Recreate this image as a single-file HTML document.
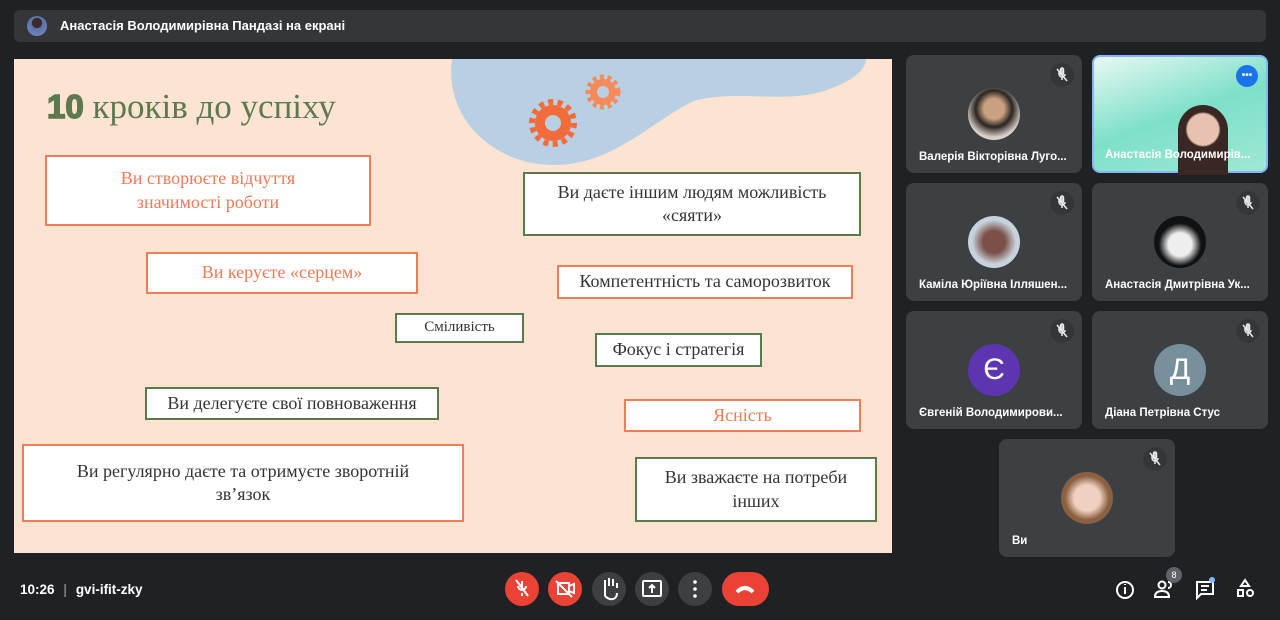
<!DOCTYPE html>
<html><head><meta charset="utf-8"><style>
*{box-sizing:border-box;margin:0;padding:0}
body{width:1280px;height:620px;background:#202124;position:relative;overflow:hidden;font-family:"Liberation Sans",sans-serif;color:#fff}
.top{position:absolute;left:14px;top:10px;width:1252px;height:32px;background:#35363a;border-radius:6px}
.top .av{position:absolute;left:13px;top:6px;width:20px;height:20px;border-radius:50%;background:radial-gradient(circle at 50% 35%,#3a2a28 30%,#5b6fa8 32%,#7b8fc8)}
.top span{position:absolute;left:46px;top:8px;font-size:13px;font-weight:bold}
.slide{position:absolute;left:14px;top:59px;width:878px;height:494px;background:#fde4d2;overflow:hidden}
.b{position:absolute;background:#fff;display:flex;align-items:center;justify-content:center;text-align:center;font-family:"Liberation Serif",serif;line-height:1.3}
.o{border:2px solid #ef7d57}
.g{border:2px solid #5b7a4c}
.ot{color:#ec7a55}.dt{color:#333}
.tile{position:absolute;width:176px;height:118px;background:#3c4043;border-radius:8px}
.tile .n{position:absolute;left:13px;bottom:10px;font-size:11.5px;font-weight:bold;color:#fff;white-space:nowrap}
.tile .m{position:absolute;right:8px;top:8px;width:24px;height:24px;border-radius:50%;background:#35363a}
.tile .p{position:absolute;left:62px;top:33px;width:52px;height:52px;border-radius:50%}
.btn{position:absolute;top:572px;width:34px;height:34px;border-radius:50%;background:#3c4043}
.red{background:#ea4335}
</style></head><body>
<svg width="0" height="0" style="position:absolute"><defs><g id="mic" fill="none" stroke="#e8eaed" stroke-width="1.5"><path d="M12,6 v5 a0,0 0 0 0 0,0 M9,9 v2 a3,3 0 0 0 6,0 M12,14 v3 M7,6 l10,12"/><rect x="10.5" y="5" width="3" height="7" rx="1.5"/></g></defs></svg>
<div class="top"><div class="av"></div><span>Анастасія Володимирівна Пандазі на екрані</span></div>
<div class="slide">
<svg style="position:absolute;left:0;top:0" width="878" height="494">
<path d="M438,0 C430,60 480,106 540,106 C600,106 640,60 680,42 C720,30 770,45 810,32 C840,22 852,10 852,0 Z" fill="#b9cfe3"/>
<g fill="#f26b3a"><circle cx="539" cy="64" r="18"/><g stroke="#f26b3a" stroke-width="6" stroke-dasharray="5 4.4"><circle cx="539" cy="64" r="21" fill="none"/></g><circle cx="539" cy="64" r="8" fill="#b9cfe3"/></g>
<g fill="#f68a5a"><circle cx="589" cy="33" r="13"/><g stroke="#f68a5a" stroke-width="5" stroke-dasharray="4 3.5"><circle cx="589" cy="33" r="15" fill="none"/></g><circle cx="589" cy="33" r="6" fill="#b9cfe3"/></g>
<circle cx="708" cy="74" r="8" fill="none" stroke="#fde4d2" stroke-width="2.5"/><circle cx="730" cy="83" r="3" fill="#fde4d2"/>
</svg>
<div style="position:absolute;left:33px;top:28px;font-family:'Liberation Serif',serif;font-size:35px;color:#5d7a4e"><b style="font-family:'Liberation Sans',sans-serif;font-weight:900;font-size:33px;-webkit-text-stroke:1.5px #5d7a4e">10</b> кроків до успіху</div>
<div class="b o ot" style="left:31px;top:96px;width:326px;height:71px;font-size:18px">Ви створюєте відчуття<br>значимості роботи</div>
<div class="b g dt" style="left:509px;top:113px;width:338px;height:64px;font-size:18px">Ви даєте іншим людям можливість<br>«сяяти»</div>
<div class="b o ot" style="left:132px;top:193px;width:272px;height:42px;font-size:18px">Ви керуєте «серцем»</div>
<div class="b o dt" style="left:543px;top:206px;width:296px;height:34px;font-size:18px">Компетентність та саморозвиток</div>
<div class="b g dt" style="left:381px;top:254px;width:129px;height:30px;font-size:15px">Сміливість</div>
<div class="b g dt" style="left:581px;top:274px;width:167px;height:34px;font-size:18px">Фокус і стратегія</div>
<div class="b g dt" style="left:131px;top:328px;width:294px;height:33px;font-size:18px">Ви делегуєте свої повноваження</div>
<div class="b o ot" style="left:610px;top:340px;width:237px;height:33px;font-size:18px">Ясність</div>
<div class="b o dt" style="left:8px;top:385px;width:442px;height:78px;font-size:18px">Ви регулярно даєте та отримуєте зворотній<br>зв’язок</div>
<div class="b g dt" style="left:621px;top:398px;width:242px;height:65px;font-size:18px">Ви зважаєте на потреби<br>інших</div>
</div>

<div class="tile" style="left:906px;top:55px"><svg class="m" viewBox="0 0 24 24"><use href="#mic"/></svg><div class="p" style="background:radial-gradient(circle at 50% 40%,#c9a080 25%,#2a2522 45%,#d8cfc8 70%)"></div><div class="n">Валерія Вікторівна Луго...</div></div>
<div class="tile" style="left:1092px;top:55px;background:linear-gradient(160deg,#e8f8f4,#7ee0c8 50%,#9ee8d4);border:2px solid #8ab4f8"><div style="position:absolute;right:8px;top:8px;width:22px;height:22px;border-radius:50%;background:#1a73e8;color:#fff;font-size:10px;font-weight:bold;text-align:center;line-height:22px">•••</div><div style="position:absolute;left:84px;top:48px;width:50px;height:70px;border-radius:25px 25px 0 0;background:radial-gradient(circle at 50% 35%,#e8c2b0 30%,#3a2622 34%)"></div><div class="n" style="left:11px">Анастасія Володимирів...</div></div>
<div class="tile" style="left:906px;top:183px"><svg class="m" viewBox="0 0 24 24"><use href="#mic"/></svg><div class="p" style="background:radial-gradient(circle at 50% 50%,#7a5048 30%,#c8d2dc 60%)"></div><div class="n">Каміла Юріївна Ілляшен...</div></div>
<div class="tile" style="left:1092px;top:183px"><svg class="m" viewBox="0 0 24 24"><use href="#mic"/></svg><div class="p" style="background:radial-gradient(circle at 50% 55%,#eee 30%,#111 55%)"></div><div class="n">Анастасія Дмитрівна Ук...</div></div>
<div class="tile" style="left:906px;top:311px"><svg class="m" viewBox="0 0 24 24"><use href="#mic"/></svg><div class="p" style="background:#5e35b1;color:#fff;font-size:30px;text-align:center;line-height:52px">Є</div><div class="n">Євгеній Володимирови...</div></div>
<div class="tile" style="left:1092px;top:311px"><svg class="m" viewBox="0 0 24 24"><use href="#mic"/></svg><div class="p" style="background:#78909c;color:#fff;font-size:30px;text-align:center;line-height:52px">Д</div><div class="n">Діана Петрівна Стус</div></div>
<div class="tile" style="left:999px;top:439px"><svg class="m" viewBox="0 0 24 24"><use href="#mic"/></svg><div class="p" style="background:radial-gradient(circle at 50% 50%,#f0d0c0 35%,#8a6040 60%)"></div><div class="n">Ви</div></div>

<div style="position:absolute;left:20px;top:582px;font-size:13.5px;font-weight:bold">10:26 <span style="color:#777;margin:0 5px">|</span> gvi-ifit-zky</div>
<div class="btn red" style="left:505px"></div>
<div class="btn red" style="left:548px"></div>
<div class="btn" style="left:592px"></div>
<div class="btn" style="left:635px"></div>
<div class="btn" style="left:678px"></div>
<div class="btn red" style="left:722px;width:47px;border-radius:17px"></div>
<svg style="position:absolute;left:0;top:560px" width="1280" height="60" fill="none" stroke="#fff" stroke-width="2">
<path d="M522,21 v8 M518,26 a4,4 0 0 0 8,0 M522,33 v3 M516,20 l12,16"/>
<rect x="558" y="23" width="11" height="11"/><path d="M569,26 l5,-2 v9 l-5,-2 M556,21 l16,16"/>
<path d="M605,36 v-10 M605,26 v-6 M609,26 v-8 M613,26 v-7 M617,28 v-5 M605,36 q4,4 8,3 q4,-1 4,-6"/>
<rect x="643" y="21" width="18" height="15" rx="1"/><path d="M652,33 v-8 M649,28 l3,-3 l3,3"/>
<g fill="#fff" stroke="none"><circle cx="695" cy="22" r="1.8"/><circle cx="695" cy="29" r="1.8"/><circle cx="695" cy="36" r="1.8"/></g>
<path d="M737,32 q8,-8 16,0" stroke-width="4"/>
<circle cx="1125" cy="30" r="8"/><path d="M1125,27 v7 M1125,24 v1"/>
<circle cx="1162" cy="25" r="3.5"/><path d="M1155,37 q0,-6 7,-6 q7,0 7,6 z M1168,22 a3,3 0 0 1 0,6"/>
<path d="M1197,22 h16 v12 h-12 l-4,4 z M1201,26 h8 M1201,30 h6"/>
<path d="M1245,20 l4,6 h-8 z"/><rect x="1238" y="30" width="5" height="6"/><circle cx="1250" cy="33" r="3"/>
</svg>
<div style="position:absolute;left:1166px;top:567px;width:16px;height:16px;border-radius:50%;background:#5f6368;font-size:9px;text-align:center;line-height:16px">8</div>
<div style="position:absolute;left:1209px;top:577px;width:6px;height:6px;border-radius:50%;background:#8ab4f8"></div>
</body></html>
